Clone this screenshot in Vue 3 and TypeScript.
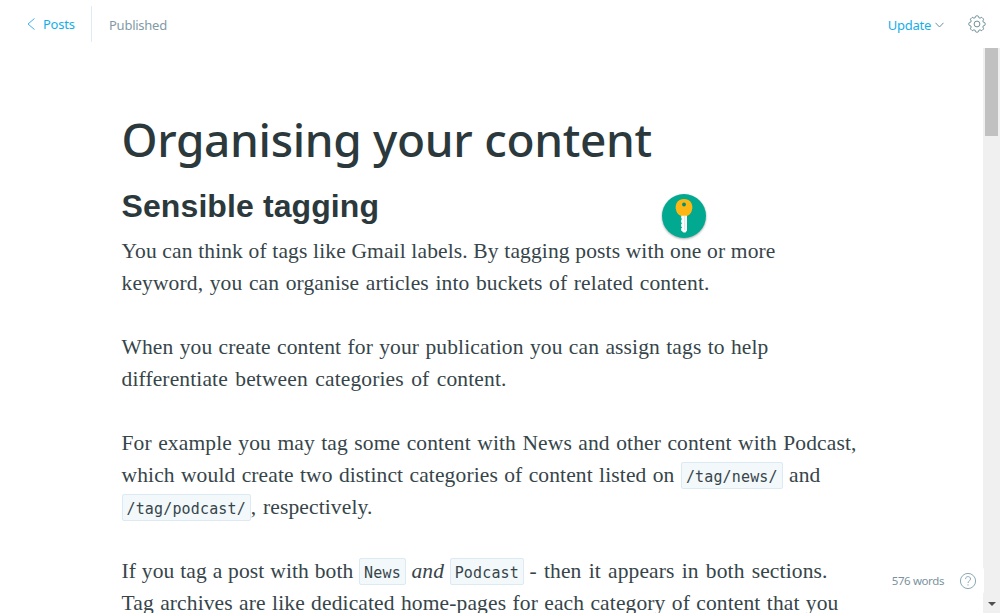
<script setup lang="ts">
interface Part {
  text: string
  kind?: 'code' | 'em' | 'run'
  width?: number
}
interface Line {
  width: number
  parts: Part[]
}

const paragraphs: Line[][] = [
  [
    { width: 654, parts: [{ text: 'You can think of tags like Gmail labels. By tagging posts with one or more' }] },
    { width: 588, parts: [{ text: 'keyword, you can organise articles into buckets of related content.' }] },
  ],
  [
    { width: 647, parts: [{ text: 'When you create content for your publication you can assign tags to help' }] },
    { width: 385, parts: [{ text: 'differentiate between categories of content.' }] },
  ],
  [
    { width: 735, parts: [{ text: 'For example you may tag some content with News and other content with Podcast,' }] },
    {
      width: 699,
      parts: [
        { text: 'which would create two distinct categories of content listed on', kind: 'run', width: 553 },
        { text: ' ' },
        { text: '/tag/news/', kind: 'code' },
        { text: ' and' },
      ],
    },
    { width: 251, parts: [{ text: '/tag/podcast/', kind: 'code' }, { text: ', respectively.' }] },
  ],
  [
    {
      width: 706,
      parts: [
        { text: 'If you tag a post with both', kind: 'run', width: 232 },
        { text: ' ' },
        { text: 'News', kind: 'code' },
        { text: ' ' },
        { text: 'and', kind: 'em' },
        { text: ' ' },
        { text: 'Podcast', kind: 'code' },
        { text: ' ' },
        { text: '- then it appears in both sections.', kind: 'run', width: 298 },
      ],
    },
    { width: 717, parts: [{ text: 'Tag archives are like dedicated home-pages for each category of content that you' }] },
  ],
]
</script>

<template>
  <div class="editor">
    <header class="bar">
      <a class="back">
        <svg width="8" height="12" viewBox="0 0 8 12"><path d="M7.500.5 1 6l6.500 5.500" /></svg>
        <span>Posts</span>
      </a>
      <span class="status">Published</span>
      <a class="update">
        <span>Update</span>
        <svg width="9" height="6" viewBox="0 0 9 6"><path d="M.5.8 4.500 5 8.500.8" /></svg>
      </a>
      <svg class="gear" width="18" height="18" viewBox="0 0 18 18">
        <path d="M7.2 2.7 Q7.300.9 8 .9h2q.7 0 .8 1.800l1.300.5q1.300-1.200 1.900-.7l1.500 1.500q.5.600-.7 1.900l.5 1.300q1.800.1 1.800.8v2q0 .7-1.800.8l-.5 1.300q1.200 1.300.7 1.900l-1.500 1.500q-.6.500-1.900-.7l-1.300.5q-.1 1.800-.8 1.800H8q-.7 0-.8-1.800l-1.300-.5q-1.300 1.200-1.900.7L2.500 14q-.5-.6.7-1.900l-.5-1.300Q.9 10.700.9 10V8q0-.7 1.800-.8l.5-1.300Q2 4.600 2.500 4L4 2.500q.6-.5 1.900.7z" />
        <circle cx="9" cy="9" r="2.900" />
      </svg>
    </header>

    <div class="body">
      <main class="page">
        <h1>Organising your content</h1>
        <h2>Sensible tagging</h2>
        <p v-for="(lines, p) in paragraphs" :key="p">
          <span v-for="(line, l) in lines" :key="l" class="line" :style="{ width: line.width + 'px' }">
            <template v-for="(part, i) in line.parts" :key="i">
              <code v-if="part.kind === 'code'">{{ part.text }}</code>
              <em v-else-if="part.kind === 'em'">{{ part.text }}</em>
              <span v-else-if="part.kind === 'run'" class="run" :style="{ width: part.width + 'px' }">{{ part.text }}</span>
              <template v-else>{{ part.text }}</template>
            </template>
          </span>
        </p>
      </main>
      <div class="track">
        <div class="thumb"></div>
        <div class="down"></div>
      </div>
    </div>

    <svg class="key" width="50" height="50" viewBox="0 0 50 50">
      <circle cx="25" cy="25" r="22" fill="#00a98f" />
      <path d="M22.200 20h5.800v19.500L26.500 41.500h-2L22.200 39.500v-2.300l1-.8-1-.8v-2.600l1-.8-1-.8v-2.600l1-.8-1-.8z" fill="#fff" />
      <path d="M25.800 25v14" stroke="#cfdbd9" stroke-width=".9" />
      <path d="M20.500 9Q25 7 29.500 9 33.600 11.500 33.300 17.300 32.500 23.600 28.300 24.800h-6.600q-4.200-1.200-5-7.500Q16.400 11.500 20.500 9z" fill="#fdb714" />
      <circle cx="25" cy="13.500" r="1.900" fill="#008c78" />
    </svg>

    <footer class="info">
      <span>576 words</span>
      <svg width="18" height="18" viewBox="0 0 18 18">
        <circle cx="9" cy="9" r="7.600" />
        <path d="M6.500 7.100C6.500 3.700 11.600 3.800 11.500 7c0 2-2.500 1.900-2.500 4M9 12.300v1.300" />
      </svg>
    </footer>
  </div>
</template>

<style>
html,
body {
  margin: 0;
  overflow: hidden;
}
</style>

<style scoped>
.editor {
  position: relative;
  width: 1000px;
  height: 613px;
  overflow: hidden;
  display: flex;
  flex-direction: column;
  background: #fff;
  font-family: 'Noto Sans', 'Open Sans', sans-serif;
}
svg {
  display: block;
  flex: none;
}
.bar {
  flex: none;
  height: 48px;
  box-sizing: border-box;
  display: flex;
  align-items: center;
  padding: 0 14px 0 27px;
  font-size: 13px;
  letter-spacing: -0.25px;
}
.bar svg,
.info svg {
  fill: none;
  stroke: #6f8f9b;
}
.back {
  display: flex;
  align-items: center;
  gap: 8px;
  width: 64px;
  height: 36px;
  border-right: 1px solid #dfebf1;
  color: #16aee8;
}
.bar .back svg {
  stroke: #3eb0ef;
}
.status {
  margin: 2px 0 0 17px;
  letter-spacing: -0.25px;
  color: #829aa6;
}
.update {
  display: flex;
  align-items: center;
  gap: 4px;
  margin: 2px 24px 0 auto;
  color: #16aee8;
}
.body {
  flex: 1;
  min-height: 0;
  display: flex;
  justify-content: space-between;
}
.page {
  padding: 59px 0 0 121.5px;
  color: #36454a;
}
h1 {
  margin: 0;
  height: 64px;
  font-size: 46px;
  line-height: 64px;
  font-weight: 500;
  letter-spacing: -0.33px;
  color: #2b393d;
  white-space: nowrap;
}
h2 {
  margin: 15px 0 9px;
  font: bold 32px/40px 'Liberation Sans', Arial, sans-serif;
  letter-spacing: 0.1px;
  color: #2b393d;
}
p {
  margin: 0 0 32px;
  font-family: 'Liberation Serif', Georgia, serif;
  font-size: 21.5px;
  line-height: 32px;
  letter-spacing: 0.13px;
}
.line {
  display: block;
  height: 32px;
  white-space: nowrap;
  text-align: justify;
  text-align-last: justify;
}
.run {
  display: inline-block;
}
code {
  display: inline-block;
  box-sizing: border-box;
  height: 27px;
  padding: 1px 4px 0;
  border: 1px solid #dcebf3;
  border-radius: 2px;
  background: #f3f8fb;
  font: 15px/27px 'DejaVu Sans Mono', monospace;
  letter-spacing: 0.15px;
}
.track {
  position: relative;
  width: 17px;
  background: #f0f0f0;
}
.thumb {
  width: 13px;
  height: 88px;
  margin-left: 2px;
  background: #c1c1c1;
}
.down {
  position: absolute;
  left: 5px;
  bottom: 7px;
  border: solid transparent;
  border-width: 4px 4px 0;
  border-top-color: #505050;
}
.key {
  position: absolute;
  left: 659px;
  top: 191px;
  filter: drop-shadow(0 1px 1px rgba(0, 0, 0, 0.35));
}
.info {
  position: absolute;
  right: 16px;
  bottom: 19px;
  height: 27px;
  display: flex;
  align-items: center;
  gap: 15px;
  padding: 0 7px 0 9px;
  border-radius: 3px;
  background: #fff;
  font-size: 11.5px;
  letter-spacing: -0.4px;
  color: #7b929e;
}
.info svg {
  stroke: #8ba9b5;
}
</style>
